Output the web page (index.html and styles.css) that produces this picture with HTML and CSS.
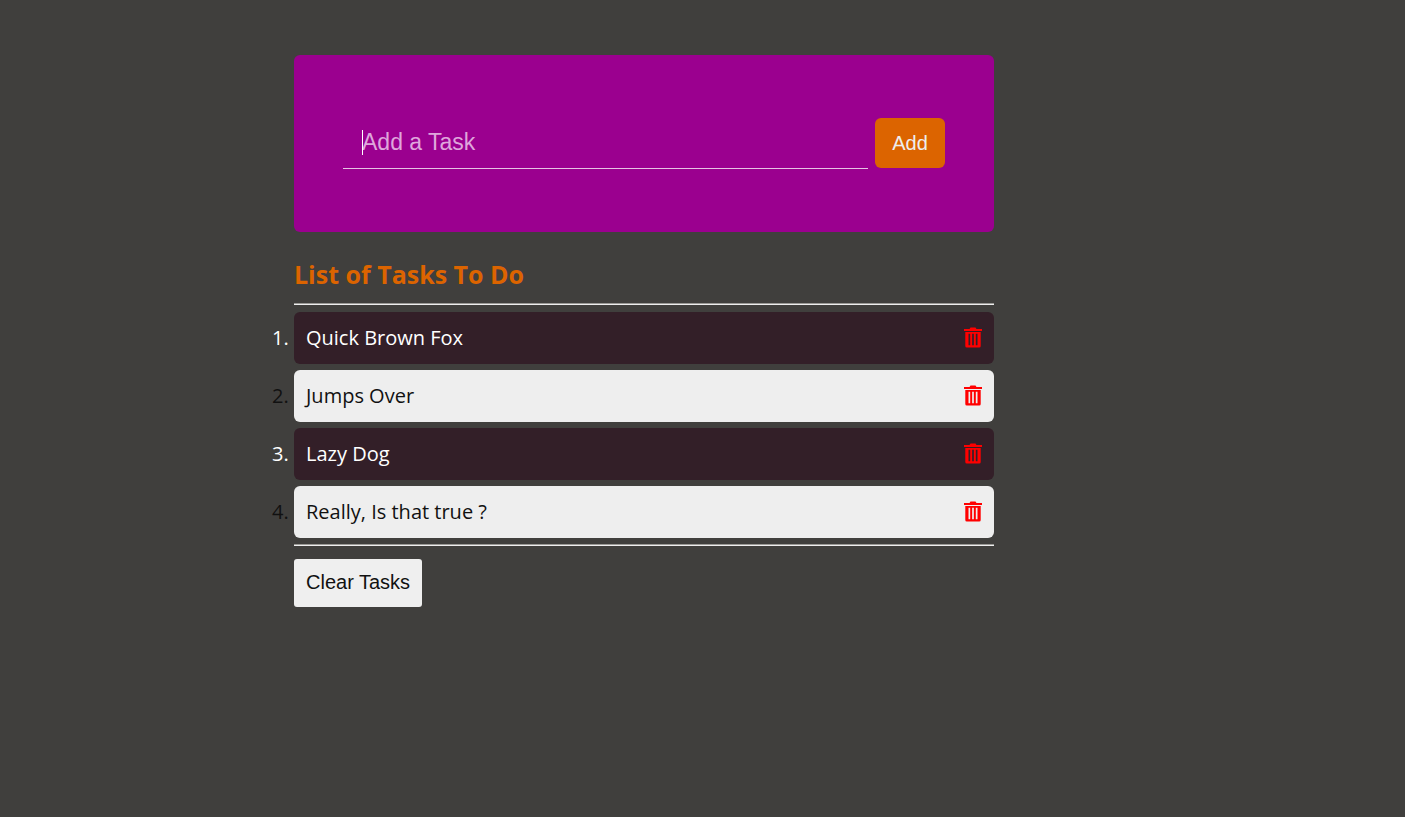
FILE: index.html
```
<!DOCTYPE html>
<html lang="en">
<head>
<meta charset="utf-8">
<title>Task List</title>
<link rel="stylesheet" href="styles.css">
</head>
<body>
<svg class="sprite" aria-hidden="true">
  <symbol id="bin" viewBox="0 0 18 22">
    <path fill-rule="evenodd" d="M0 2h5.500L6.500.500h5L12.500 2H18v2H0zM1.300 5h15.400v14a1.500 1.500 0 0 1-1.500 1.500H2.800A1.500 1.500 0 0 1 1.300 19zM4.500 6.700v11.600h1.700V6.700zm3.650 0v11.600h1.700V6.700zm3.650 0v11.600h1.700V6.700z"/>
  </symbol>
</svg>
<main class="app">
  <form class="task-form">
    <div class="field">
      <input class="task-input" type="text" placeholder="Add a Task" aria-label="Add a Task">
      <span class="caret"></span>
    </div>
    <button class="add-button" type="button">Add</button>
  </form>
  <h1 class="title">List of Tasks To Do</h1>
  <hr class="rule">
  <ol class="tasks">
    <li class="task"><div class="task-row"><span>Quick Brown Fox</span><button class="delete" type="button" aria-label="Delete Quick Brown Fox"><svg class="icon"><use href="#bin"/></svg></button></div></li>
    <li class="task"><div class="task-row"><span>Jumps Over</span><button class="delete" type="button" aria-label="Delete Jumps Over"><svg class="icon"><use href="#bin"/></svg></button></div></li>
    <li class="task"><div class="task-row"><span>Lazy Dog</span><button class="delete" type="button" aria-label="Delete Lazy Dog"><svg class="icon"><use href="#bin"/></svg></button></div></li>
    <li class="task"><div class="task-row"><span>Really, Is that true ?</span><button class="delete" type="button" aria-label="Delete Really, Is that true ?"><svg class="icon"><use href="#bin"/></svg></button></div></li>
  </ol>
  <hr class="rule">
  <button class="clear-button" type="button">Clear Tasks</button>
</main>
</body>
</html>
```
FILE: styles.css
```
* { box-sizing: border-box; }
body {
  margin: 0;
  padding: 55px 117px 55px 0;
  background: #403f3d;
  color: #111;
  font-family: "Open Sans", sans-serif;
  font-size: 20px;
  line-height: 28px;
}
button, input { font-family: "Liberation Sans", Arial, sans-serif; }
.sprite { display: none; }
.app { max-width: 700px; margin: 0 auto; }
.task-form {
  display: flex;
  gap: 7px;
  padding: 63px 49px;
  background: #9b008f;
  border-radius: 6px;
}
.field { position: relative; flex: 1; }
.task-input {
  display: block;
  width: 100%;
  height: 51px;
  padding: 0 19px 2px;
  border: 0;
  border-bottom: 1px solid #e6c4e4;
  outline: 0;
  background: transparent;
  color: #fff;
  font-size: 23px;
}
.task-input::placeholder { color: #dfa6dc; opacity: 1; }
.caret {
  position: absolute;
  top: 12px;
  left: 19px;
  width: 1px;
  height: 25px;
  background: #fff;
}
.add-button {
  width: 70px;
  height: 50px;
  padding: 0;
  border: 0;
  border-radius: 6px;
  background: #dc6400;
  color: #eee;
  font-size: 20px;
}
.title {
  margin: 27px 0 14px;
  color: #dc6400;
  font-size: 25px;
  line-height: 30px;
}
.rule {
  margin: 0;
  border: 0;
  border-top: 1px solid #9a9996;
  border-bottom: 1px solid #eee;
}
.tasks {
  display: grid;
  gap: 6px;
  margin: 0;
  padding: 7px 0 6px;
}
.task:nth-child(odd) { color: #fff; font-weight: 500; }
.task-row {
  display: flex;
  align-items: center;
  justify-content: space-between;
  padding: 12px;
  border-radius: 6px;
  background: #eee;
}
.task:nth-child(odd) .task-row { background: #331f28; }
.delete { display: flex; padding: 0; border: 0; background: none; color: #f00; }
.icon { width: 18px; height: 22px; fill: currentColor; }
.clear-button {
  margin-top: 13px;
  padding: 11px 12px 13px;
  border: 0;
  border-radius: 3px;
  background: #efefef;
  color: #111;
  font-size: 20px;
  line-height: 24px;
}
```
